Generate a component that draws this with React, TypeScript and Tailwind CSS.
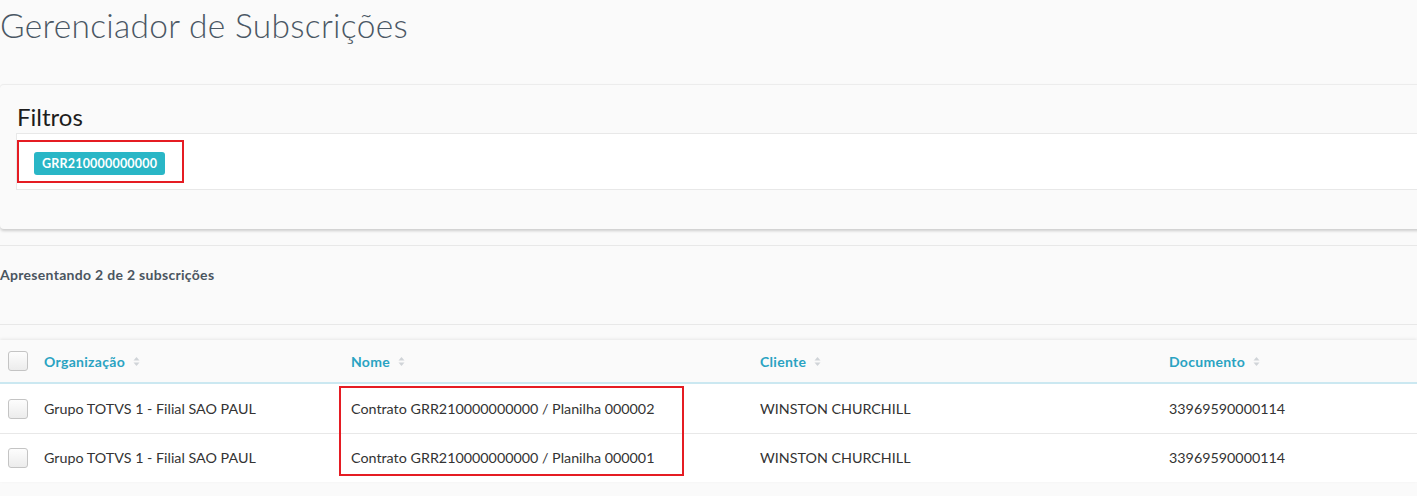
import React from 'react';

interface Subscription {
  organizacao: string;
  nome: string;
  cliente: string;
  documento: string;
}

const subscriptions: Subscription[] = [
  {
    organizacao: 'Grupo TOTVS 1 - Filial SAO PAUL',
    nome: 'Contrato GRR210000000000 / Planilha 000002',
    cliente: 'WINSTON CHURCHILL',
    documento: '33969590000114',
  },
  {
    organizacao: 'Grupo TOTVS 1 - Filial SAO PAUL',
    nome: 'Contrato GRR210000000000 / Planilha 000001',
    cliente: 'WINSTON CHURCHILL',
    documento: '33969590000114',
  },
];

const columns = [
  { label: 'Organização', width: 'w-[307px]' },
  { label: 'Nome', width: 'w-[409px]' },
  { label: 'Cliente', width: 'w-[409px]' },
  { label: 'Documento', width: 'w-[300px]' },
];

const SortIcon: React.FC = () => (
  <svg width="7" height="11" viewBox="0 0 7 11" className="ml-[8px] inline-block">
    <path d="M3.5 1 L6.5 4.5 L0.5 4.5 Z" fill="#d0d4d8" />
    <path d="M3.5 10 L6.5 6.5 L0.5 6.5 Z" fill="#d0d4d8" />
  </svg>
);

const Checkbox: React.FC = () => (
  <span className="block h-[20px] w-[20px] rounded-[3px] border border-[#c4c4c4] bg-gradient-to-b from-[#fdfdfd] to-[#ececec]" />
);

const App: React.FC = () => {
  return (
    <div className="h-[496px] w-[1417px] overflow-hidden bg-[#fafafa] font-['Lato','Noto_Sans',sans-serif] text-[#333]">
      <h1 className="pt-[5px] text-[33.5px] font-light leading-[40px] tracking-[0.3px] text-[#4a5764]">
        Gerenciador de Subscrições
      </h1>

      <section className="mt-[39px] w-[1430px] rounded-l-[4px] border-t border-[#ececec] bg-[#fafafa] shadow-[0_2px_3px_rgba(0,0,0,0.18)]">
        <h2 className="px-[17px] pt-[16px] text-[24px] leading-[31px] text-[#1d1d1d]">Filtros</h2>
        <div className="ml-[16px] mt-[1px] h-[57px] border border-r-0 border-[#e8e8e8] bg-white pt-[6px]">
          <div className="h-[43px] w-[167px] border-2 border-[#e51c23] pl-[15px] pt-[8px]">
            <span className="inline-block h-[23px] rounded-[3px] bg-[#29b6c6] px-[8px] text-[12.5px] font-bold leading-[23px] tracking-[0.2px] text-white">
              GRR210000000000
            </span>
          </div>
        </div>
        <div className="h-[39px]" />
      </section>

      <div className="mt-[16px] h-[80px] border-y border-[#e8e8e8]">
        <p className="pt-[18px] text-[14px] font-bold tracking-[0.3px] text-[#4a5560]">Apresentando 2 de 2 subscrições</p>
      </div>

      <div className="relative mt-[15px] bg-white shadow-[0_-1px_3px_rgba(0,0,0,0.08)]">
        <div className="flex h-[44px] items-center border-b-2 border-[#cbe8f1] bg-[#fafafa]">
          <div className="flex w-[44px] shrink-0 pl-[8px]">
            <Checkbox />
          </div>
          {columns.map((column) => (
            <div key={column.label} className={`${column.width} flex shrink-0 items-center text-[14px] font-bold tracking-[0.3px] text-[#2aa3c2]`}>
              {column.label}
              <SortIcon />
            </div>
          ))}
        </div>
        {subscriptions.map((row, index) => (
          <div
            key={row.nome}
            className={`flex h-[49px] items-center text-[14.3px] text-[#333] ${index > 0 ? 'border-t border-[#e8e8e8]' : ''}`}
          >
            <div className="flex w-[44px] shrink-0 pl-[8px]">
              <Checkbox />
            </div>
            <div className="w-[307px] shrink-0">{row.organizacao}</div>
            <div className="w-[409px] shrink-0">{row.nome}</div>
            <div className="w-[409px] shrink-0">{row.cliente}</div>
            <div className="w-[300px] shrink-0">{row.documento}</div>
          </div>
        ))}
        <div className="pointer-events-none absolute left-[339px] top-[46px] h-[90px] w-[345px] border-2 border-[#e51c23]" />
      </div>
    </div>
  );
};

export default App;
